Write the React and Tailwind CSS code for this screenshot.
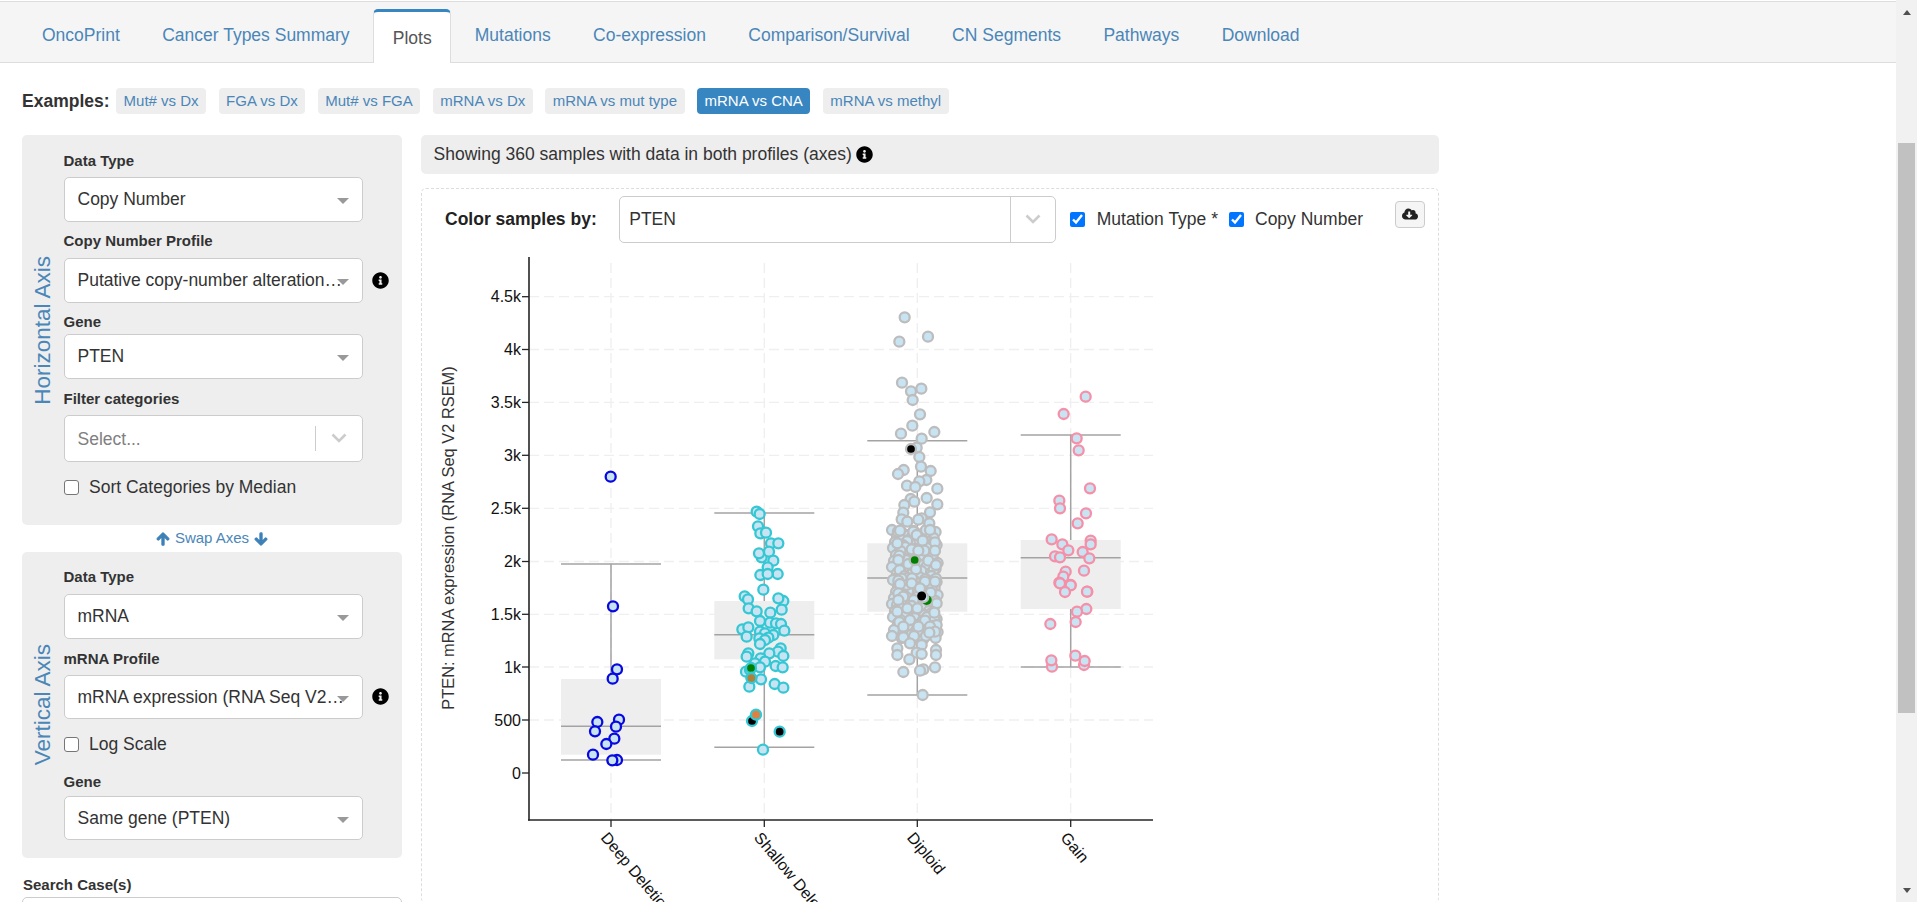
import React from "react";
import { FaArrowUp, FaArrowDown, FaInfoCircle, FaCloudDownloadAlt } from "react-icons/fa";

const TABS = ["OncoPrint", "Cancer Types Summary", "Plots", "Mutations", "Co-expression", "Comparison/Survival", "CN Segments", "Pathways", "Download"];
const EXAMPLES = ["Mut# vs Dx", "FGA vs Dx", "Mut# vs FGA", "mRNA vs Dx", "mRNA vs mut type", "mRNA vs CNA", "mRNA vs methyl"];

// point positions read off the crops, then shifted back to page coords
const at = (ox, oy, list) => list.map(([x, y]) => [ox + x / 3, oy + y / 3]);

const deep = [
  ...at(420, 250, [[572, 680]]),
  ...at(420, 570, [[579, 109], [591, 298], [578, 326], [532, 456], [597, 449], [588, 470], [525, 484], [583, 506], [559, 522], [519, 554], [591, 570], [577, 571]]),
];

const shallow = [
  ...at(420, 250, [[1010, 785], [1019, 792], [1014, 829], [1021, 850], [1038, 848], [1053, 880], [1075, 880], [1025, 922], [1017, 910], [1047, 905], [1060, 932], [1043, 952], [1021, 975], [1073, 972], [1043, 972]]),
  ...at(420, 570, [[1030, 59], [974, 79], [984, 88], [1090, 93], [1075, 85], [986, 115], [1085, 119], [1010, 124], [1051, 128], [1020, 153], [1050, 158], [1068, 160], [1083, 162], [967, 178], [985, 172], [1093, 182], [1020, 185], [1035, 190], [1060, 195], [980, 200], [1018, 205], [1045, 203], [1035, 210], [1020, 222], [1082, 235], [985, 250], [1074, 245], [1048, 250], [980, 260], [1090, 258], [1022, 265], [1035, 275], [1005, 280], [1067, 288], [1088, 292], [1020, 292], [978, 305], [990, 300], [1023, 328], [1064, 342], [988, 350], [1090, 353], [1029, 539]]),
];

const shallowMut = [
  [...at(420, 570, [[993, 294]])[0], "#008000"],
  [...at(420, 570, [[994, 324]])[0], "#b08038"],
  [...at(420, 570, [[996, 453]])[0], "#000000"],
  [...at(420, 570, [[1008, 434]])[0], "#e08040"],
  [...at(420, 570, [[1079, 485]])[0], "#000000"],
];

// packed middle of the diploid column
const diploidFill = [];
for (let row = 0; row < 22; row++) {
  for (let col = 0; col < 7; col++) {
    diploidFill.push([895 + col * 6.6 + ((row * 5 + col * 3) % 7) - 3, 530 + row * 5 + ((col * 7 + row) % 5)]);
  }
}

const diploid = [
  ...diploidFill,
  ...at(810, 290, [[284, 82], [354, 140], [268, 155], [276, 278], [303, 304], [334, 296], [308, 330], [330, 373], [307, 407], [273, 431], [373, 426], [335, 446], [320, 473], [328, 501], [333, 530], [281, 540], [264, 552], [362, 543], [349, 570], [328, 574], [291, 587], [316, 591], [382, 596], [350, 624], [302, 627], [313, 635], [283, 645], [382, 643], [360, 667], [280, 668], [275, 688], [335, 685], [292, 695], [325, 689], [358, 700], [360, 720], [264, 725], [270, 722], [310, 725], [320, 735], [338, 752], [262, 760], [375, 757], [305, 778], [343, 782], [375, 782], [325, 782], [268, 797], [265, 810], [355, 812], [378, 825], [295, 822], [318, 838], [275, 866], [306, 865], [345, 868], [378, 866], [265, 872], [330, 890], [365, 895], [290, 885]]),
  ...at(810, 580, [[270, 12], [305, 10], [345, 5], [375, 5], [330, 25], [265, 40], [362, 38], [280, 50], [265, 60], [380, 70], [292, 85], [322, 85], [262, 95], [373, 98], [300, 120], [345, 122], [268, 126], [280, 140], [380, 135], [325, 140], [360, 140], [375, 155], [358, 158], [312, 168], [280, 172], [300, 190], [335, 195], [262, 205], [378, 210], [320, 218], [335, 222], [262, 225], [378, 225], [298, 238], [340, 268], [330, 272], [280, 276], [375, 262], [338, 345]]),
];

const gain = [
  ...at(810, 290, [[827, 320], [761, 372], [800, 445], [806, 481], [840, 595], [748, 632], [750, 655], [828, 670], [803, 700], [725, 748], [842, 752], [842, 763], [757, 763], [775, 781], [818, 786], [735, 799], [750, 802], [838, 805], [822, 842], [767, 845], [760, 860], [748, 878], [782, 885], [832, 905]]),
  ...at(810, 580, [[750, 10], [782, 16], [765, 36], [831, 35], [829, 87], [801, 95], [797, 126], [721, 132], [796, 227], [726, 260], [724, 241], [822, 255], [824, 243]]),
];

const BOXES = [
  { x: 611, top: 679, bottom: 754.7, median: 726.3, hi: 564, lo: 760 },
  { x: 764.3, top: 601, bottom: 659.3, median: 634.7, hi: 513, lo: 747.3 },
  { x: 917.3, top: 543.3, bottom: 611.7, median: 578, hi: 440.7, lo: 695 },
  { x: 1070.7, top: 540, bottom: 609, median: 557.7, hi: 435, lo: 667 },
];

const YTICKS = [
  ["4.5k", 296.7], ["4k", 349.5], ["3.5k", 402.4], ["3k", 455.3], ["2.5k", 508.3],
  ["2k", 561.5], ["1.5k", 614.3], ["1k", 667], ["500", 720], ["0", 773],
];

const XLABELS = ["Deep Deletion", "Shallow Deletion", "Diploid", "Gain"];
const LIGHT = "#c8e4f3";

function Dots({ points, color }) {
  return points.map(([x, y], i) => (
    <circle key={i} cx={x} cy={y} r="5" fill={LIGHT} stroke={color} strokeWidth="2.3" />
  ));
}

function Plot() {
  return (
    <svg width="768" height="652" viewBox="422 250 768 652" className="block shrink-0">
      {YTICKS.filter((t) => t[0] !== "0").map(([label, y]) => (
        <line key={label} x1="529" x2="1153" y1={y} y2={y} stroke="#efefef" strokeWidth="1.3" strokeDasharray="10 5" />
      ))}
      {BOXES.map((b) => (
        <line key={b.x} x1={b.x} x2={b.x} y1="263" y2="820" stroke="#efefef" strokeWidth="1.3" strokeDasharray="10 5" />
      ))}

      {BOXES.map((b) => (
        <g key={b.x} stroke="#a3a3a3" strokeWidth="1.5">
          <rect x={b.x - 50} y={b.top} width="100" height={b.bottom - b.top} fill="#eeeeee" stroke="none" />
          <line x1={b.x} x2={b.x} y1={b.hi} y2={b.top} />
          <line x1={b.x} x2={b.x} y1={b.bottom} y2={b.lo} />
          <line x1={b.x - 50} x2={b.x + 50} y1={b.hi} y2={b.hi} />
          <line x1={b.x - 50} x2={b.x + 50} y1={b.lo} y2={b.lo} />
          <line x1={b.x - 50} x2={b.x + 50} y1={b.median} y2={b.median} />
        </g>
      ))}

      <Dots points={deep} color="#0808e0" />
      <Dots points={shallow} color="#35c7d3" />
      {shallowMut.map(([x, y, fill], i) => (
        <circle key={i} cx={x} cy={y} r="5" fill={fill} stroke="#35c7d3" strokeWidth="2.3" />
      ))}
      <Dots points={diploid} color="#bdbdbd" />
      <circle cx={810 + 314 / 3} cy={290 + 810 / 3} r="5" fill="#008000" stroke="#bdbdbd" strokeWidth="2.3" />
      <circle cx={810 + 303 / 3} cy={290 + 477 / 3} r="5" fill="#000000" stroke="#bdbdbd" strokeWidth="2.3" />
      <circle cx={810 + 350 / 3} cy={580 + 60 / 3} r="5" fill="#008000" />
      <circle cx={810 + 340 / 3} cy={580 + 52 / 3} r="5" fill={LIGHT} stroke="#bdbdbd" strokeWidth="2" />
      <circle cx={810 + 335 / 3} cy={580 + 48 / 3} r="4.5" fill="#000000" />
      <Dots points={gain} color="#f590a8" />

      <line x1="529" x2="529" y1="257" y2="820.5" stroke="#252525" strokeWidth="1.6" />
      <line x1="528" x2="1153" y1="820" y2="820" stroke="#252525" strokeWidth="1.6" />

      {YTICKS.map(([label, y]) => (
        <g key={label}>
          <line x1="522" x2="529" y1={y} y2={y} stroke="#252525" strokeWidth="1.3" />
          <text x="521" y={y + 5.5} textAnchor="end" fontSize="16" fill="#111111">{label}</text>
        </g>
      ))}
      {BOXES.map((b, i) => (
        <g key={b.x}>
          <line x1={b.x} x2={b.x} y1="820" y2="827" stroke="#252525" strokeWidth="1.3" />
          <text transform={`translate(${b.x - 11} 838) rotate(50)`} fontSize="16" fill="#111111">{XLABELS[i]}</text>
        </g>
      ))}
      <text transform="translate(454 538) rotate(-90)" textAnchor="middle" fontSize="16.4" fill="#333333">
        PTEN: mRNA expression (RNA Seq V2 RSEM)
      </text>
    </svg>
  );
}

function Label({ children, className = "" }) {
  return <div className={`h-[21px] text-[15px] leading-[21px] font-bold text-[#333] ${className}`}>{children}</div>;
}

function Caret() {
  return <span className="absolute right-[13px] top-[20px] h-0 w-0 border-x-[6px] border-t-[6px] border-x-transparent border-t-[#999]" />;
}

function Chevron() {
  return (
    <svg width="20" height="14" viewBox="0 0 20 14" className="shrink-0">
      <path d="M3.5 3.5 L10 10 L16.5 3.5" fill="none" stroke="#cccccc" strokeWidth="2.6" />
    </svg>
  );
}

function Select({ children, className = "" }) {
  return (
    <div className={`relative flex h-[44.5px] w-[299px] items-center rounded-[5px] border border-[#ccc] bg-white pl-[13px] text-[17.5px] text-[#333] ${className}`}>
      <span className="w-[270.5px] shrink-0 truncate">{children}</span>
      <Caret />
    </div>
  );
}

function Check({ children, className = "" }) {
  return (
    <div className={`flex h-[21px] items-center text-[17.5px] text-[#333] ${className}`}>
      <span className="h-[15px] w-[15px] shrink-0 rounded-[3px] border border-[#767676] bg-white" />
      <span className="ml-[10.5px]">{children}</span>
    </div>
  );
}

function AxisTitle({ children }) {
  return (
    <div className="flex w-[41.5px] shrink-0 items-center justify-center">
      <span className="rotate-180 text-[22.5px] leading-none whitespace-nowrap text-[#4a86b8] [writing-mode:vertical-rl]">{children}</span>
    </div>
  );
}

function Info() {
  return <FaInfoCircle className="text-[17px] text-black" />;
}

function BlueCheck({ children, className = "" }) {
  return (
    <div className={`flex items-center ${className}`}>
      <input type="checkbox" readOnly checked className="m-0 h-[15px] w-[15px] accent-[#0075ff]" />
      <span className="ml-[11.5px] text-[17.5px] whitespace-nowrap text-[#333]">{children}</span>
    </div>
  );
}

export default function App() {
  return (
    <div className="flex h-screen w-full overflow-hidden bg-white font-['Liberation_Sans',Arial,sans-serif] text-[#333]">
      <div className="w-[1896px] shrink-0">
        {/* tabs */}
        <div className="mt-[1px] flex h-[62px] items-end gap-[4.4px] border-y border-[#ddd] bg-[#f5f5f5] pl-[23px]">
          {TABS.map((tab) =>
            tab === "Plots" ? (
              <div key={tab} className="-mb-px flex h-[54px] items-center rounded-t-[5px] border-x border-t-[3px] border-x-[#ddd] border-t-[#3786c2] bg-white px-[18.75px] pt-[1px] text-[17.5px] text-[#555]">
                {tab}
              </div>
            ) : (
              <div key={tab} className="flex h-[53px] items-center px-[19px] pb-[1px] text-[17.5px] text-[#4a86b8]">
                {tab}
              </div>
            )
          )}
        </div>

        {/* examples */}
        <div className="mt-[25px] ml-[22px] flex h-[26px] items-center">
          <span className="mr-[6.5px] text-[17.5px] font-bold text-[#333]">Examples:</span>
          <div className="flex gap-[12.5px]">
            {EXAMPLES.map((ex) => (
              <span
                key={ex}
                className={`flex h-[26px] items-center rounded-[4px] px-[7.5px] text-[15px] ${ex === "mRNA vs CNA" ? "bg-[#3786c2] text-white" : "bg-[#eee] text-[#4a86b8]"}`}
              >
                {ex}
              </span>
            ))}
          </div>
        </div>

        <div className="mt-[21px] ml-[22px] flex gap-[19px]">
          {/* left column */}
          <div className="w-[380px] shrink-0">
            <div className="flex h-[390px] rounded-[5px] bg-[#eee]">
              <AxisTitle>Horizontal Axis</AxisTitle>
              <div className="pt-[14.5px]">
                <Label>Data Type</Label>
                <Select className="mt-[6.5px]">Copy Number</Select>
                <Label className="mt-[8.5px]">Copy Number Profile</Label>
                <div className="mt-[7px] flex items-center">
                  <Select>Putative copy-number alterations from GISTIC</Select>
                  <span className="ml-[9px] flex"><Info /></span>
                </div>
                <Label className="mt-[8px]">Gene</Label>
                <Select className="mt-[2.5px]">PTEN</Select>
                <Label className="mt-[9.5px]">Filter categories</Label>
                <div className="relative mt-[6px] flex h-[46.5px] w-[299px] items-center rounded-[5px] border border-[#ccc] bg-white pl-[13px] text-[17.5px] text-[#808080]">
                  <span className="flex-1 pt-[1px]">Select...</span>
                  <span className="h-[25px] w-px bg-[#ccc]" />
                  <span className="mx-[13px] flex"><Chevron /></span>
                </div>
                <Check className="mt-[15.5px]">Sort Categories by Median</Check>
              </div>
            </div>

            <div className="flex h-[27px] items-center justify-center text-[15px] text-[#4a86b8]">
              <FaArrowUp className="mr-[5px] stroke-[#3d80b8] stroke-[40] text-[14px] text-[#3d80b8]" />
              Swap Axes
              <FaArrowDown className="ml-[5px] stroke-[#3d80b8] stroke-[40] text-[14px] text-[#3d80b8]" />
            </div>

            <div className="flex h-[306px] rounded-[5px] bg-[#eee]">
              <AxisTitle>Vertical Axis</AxisTitle>
              <div className="pt-[14px]">
                <Label>Data Type</Label>
                <Select className="mt-[7px]">mRNA</Select>
                <Label className="mt-[9px]">mRNA Profile</Label>
                <div className="mt-[6px] flex items-center">
                  <Select>mRNA expression (RNA Seq V2 RSEM)</Select>
                  <span className="ml-[9px] flex"><Info /></span>
                </div>
                <Check className="mt-[15px]">Log Scale</Check>
                <Label className="mt-[15.5px]">Gene</Label>
                <Select className="mt-[4px]">Same gene (PTEN)</Select>
              </div>
            </div>

            <Label className="mt-[15.5px] ml-[1px]">Search Case(s)</Label>
            <div className="mt-[2px] h-[40px] rounded-[5px] border border-[#ccc] bg-white" />
          </div>

          {/* plot column */}
          <div className="w-[1017.5px] shrink-0">
            <div className="flex h-[38.5px] items-center gap-[4px] rounded-[5px] bg-[#eee] pl-[12.5px] text-[17.5px] text-[#333]">
              Showing 360 samples with data in both profiles (axes)
              <Info />
            </div>
            <div className="mt-[14px] rounded-[5px] border border-dashed border-[#ddd]">
              <div className="relative flex h-[61.5px] items-center pl-[23px]">
                <span className="text-[17.5px] font-bold text-[#222]">Color samples by:</span>
                <div className="ml-[22px] flex h-[47.5px] w-[437.5px] items-center rounded-[5px] border border-[#ccc] bg-white pl-[9.5px] text-[17.5px]">
                  <span className="flex-1">PTEN</span>
                  <span className="h-full w-px bg-[#ccc]" />
                  <span className="mx-[12px] flex"><Chevron /></span>
                </div>
                <BlueCheck className="ml-[14px]">Mutation Type *</BlueCheck>
                <BlueCheck className="ml-[10.5px]">Copy Number</BlueCheck>
                <div className="absolute top-[12px] right-[13px] flex h-[27px] w-[30px] items-center justify-center rounded-[4px] border border-[#ccc] bg-[#f5f5f5]">
                  <FaCloudDownloadAlt className="text-[16px] text-[#222]" />
                </div>
              </div>
              <Plot />
            </div>
          </div>
        </div>
      </div>

      {/* browser scrollbar */}
      <div className="flex w-[21px] shrink-0 flex-col items-center bg-[#f1f1f1]">
        <span className="mt-[10px] h-0 w-0 border-x-[4.5px] border-b-[5px] border-x-transparent border-b-[#505050]" />
        <div className="mt-[128px] h-[570px] w-[17px] bg-[#c1c1c1]" />
        <span className="mt-auto mb-[9px] h-0 w-0 border-x-[4.5px] border-t-[5px] border-x-transparent border-t-[#505050]" />
      </div>
    </div>
  );
}
